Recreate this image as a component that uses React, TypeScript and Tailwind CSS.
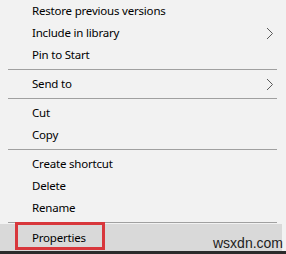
import React from 'react';

type Entry = { label?: string; sub?: boolean; sep?: boolean };

const entries: Entry[] = [
  { label: 'Restore previous versions' },
  { label: 'Include in library', sub: true },
  { label: 'Pin to Start' },
  { sep: true },
  { label: 'Send to', sub: true },
  { sep: true },
  { label: 'Cut' },
  { label: 'Copy' },
  { sep: true },
  { label: 'Create shortcut' },
  { label: 'Delete' },
  { label: 'Rename' },
];

const Chevron = () => (
  <svg width="8" height="13" viewBox="0 0 8 13" className="absolute right-[12px] top-[5px]">
    <path d="M1 1 L6.5 6.5 L1 12" fill="none" stroke="#5a5a5a" strokeWidth="1" />
  </svg>
);

const App: React.FC = () => {
  return (
    <div
      className="w-[286px] h-[254px] bg-[#f2f2f2] text-black text-[11.5px] tracking-[-0.2px] flex flex-col relative overflow-hidden"
      style={{ fontFamily: '"Noto Sans", "Open Sans", sans-serif' }}
    >
      {entries.map((e, i) =>
        e.sep ? (
          <div key={i} className="h-[7px] flex items-center pl-[8px] pr-[9px]">
            <div className="h-px w-full bg-[#a0a0a0]" />
          </div>
        ) : (
          <div key={i} className="h-[22px] flex items-center pl-[32px] relative leading-none">
            <span>{e.label}</span>
            {e.sub && <Chevron />}
          </div>
        )
      )}

      {/* last separator, a bit tighter */}
      <div className="h-[5px] flex items-start pt-[3px] pl-[8px] pr-[9px]">
        <div className="h-px w-full bg-[#a0a0a0]" />
      </div>

      {/* highlighted item */}
      <div className="h-[27px] bg-[#d9d9d9] mr-[4px] flex items-center pl-[32px] leading-none relative">
        <span>Properties</span>
      </div>

      <div className="h-[3px] bg-[#2b2b2b]" />

      {/* red annotation box */}
      <div className="absolute left-[15px] top-[222px] w-[90px] h-[28px] border-[3px] border-[#d8373c]" />

      {/* watermark */}
      <div
        className="absolute left-[213px] top-[236px] text-[14px] tracking-normal text-[#222] leading-none"
        style={{ fontFamily: '"Liberation Sans", Arial, sans-serif' }}
      >
        wsxdn.com
      </div>
    </div>
  );
};

export default App;
